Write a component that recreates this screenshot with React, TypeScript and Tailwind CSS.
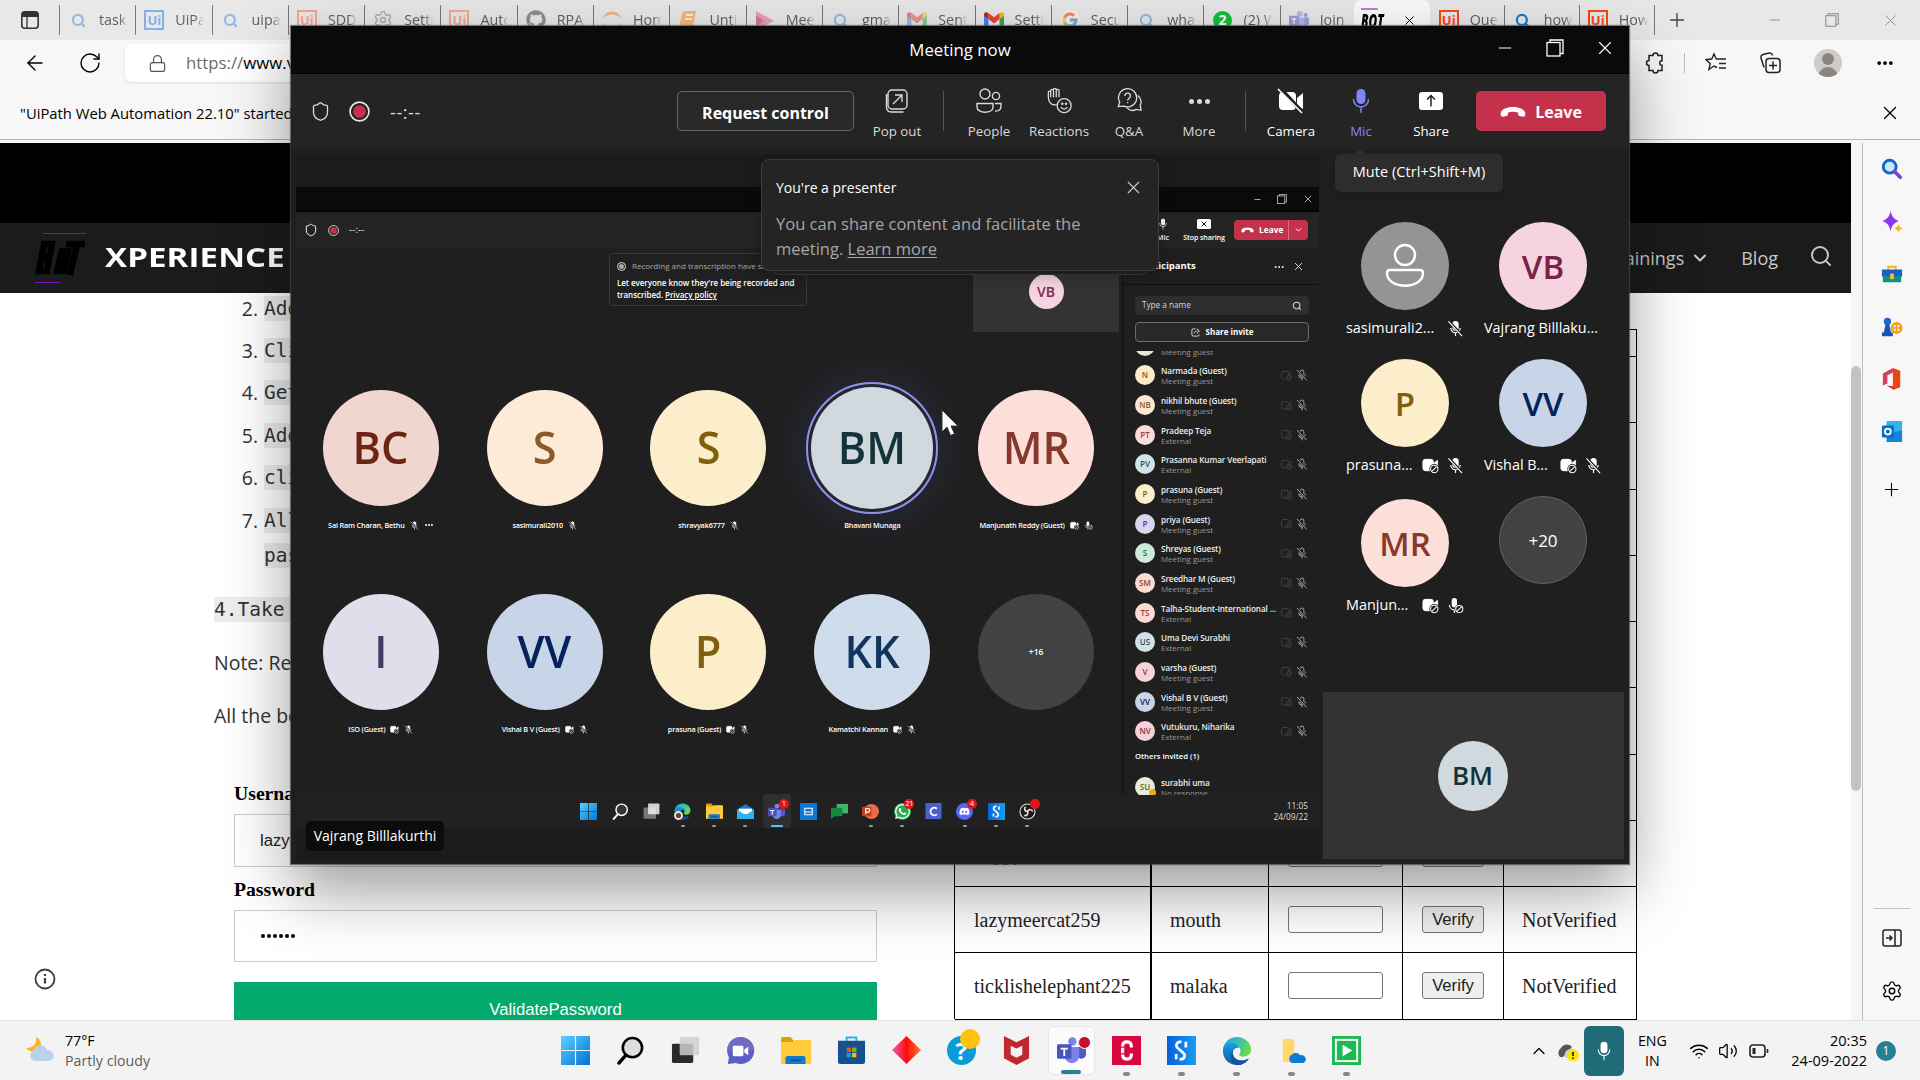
import React from "react";
import {
  ArrowLeft, RotateCw, Lock, Search, Settings, X, Plus, Minus, Shield, ChevronDown, ChevronUp,
  Wifi, Volume2, MoreHorizontal,
} from "lucide-react";
import { FcGoogle } from "react-icons/fc";
import { FaGithub, FaWhatsapp, FaDiscord } from "react-icons/fa";

type P = { c?: string };

/* ---------- shared glyphs ---------- */
const Restore = ({ c = "" }: P) => (
  <svg viewBox="0 0 18 18" className={c} fill="none" stroke="currentColor" strokeWidth="1.3">
    <rect x="1" y="3.5" width="13" height="13.5" /><path d="M4 3.5V1h13v13.5h-3" />
  </svg>
);
const RecordDot = ({ c = "" }: P) => (
  <svg viewBox="0 0 20 20" className={c}>
    <circle cx="10" cy="10" r="9" fill="none" stroke="#e6e6e6" strokeWidth="1.6" /><circle cx="10" cy="10" r="6" fill="#c4314b" />
  </svg>
);
const MicFull = ({ c = "" }: P) => (
  <svg viewBox="0 0 20 26" className={c}>
    <rect x="5.5" y="1" width="9" height="15" rx="4.5" fill="currentColor" />
    <path d="M2.5 11.5a7.5 7.5 0 0 0 15 0M10 19v5.5" fill="none" stroke="currentColor" strokeWidth="1.5" strokeLinecap="round" />
  </svg>
);
const MicOff = ({ c = "", line = false }: P & { line?: boolean }) => (
  <svg viewBox="0 0 18 18" className={c}>
    <rect x="6.2" y="1.5" width="5.6" height="9.5" rx="2.8" fill={line ? "none" : "currentColor"} stroke="currentColor" strokeWidth="1.1" />
    <path d="M4 8.5a5 5 0 0 0 10 0M9 13.5V17" fill="none" stroke="currentColor" strokeWidth="1.2" />
    <path d="M2 1.5 16 16.5" stroke="#1f1f1f" strokeWidth="3" /><path d="M1.5 1.5 16 17" stroke="currentColor" strokeWidth="1.2" />
  </svg>
);
const CamBlock = ({ c = "", line = false }: P & { line?: boolean }) => (
  <svg viewBox="0 0 18 18" className={c}>
    <rect x="1" y="2.5" width="11" height="12" rx="2.5" fill={line ? "none" : "currentColor"} stroke="currentColor" />
    <path d="M13 6l3.5-2.5V9H13z" fill={line ? "none" : "currentColor"} stroke="currentColor" strokeWidth=".8" />
    <circle cx="13" cy="12.7" r="5.2" fill="#1f1f1f" /><circle cx="13" cy="12.7" r="3.9" fill="none" stroke="currentColor" strokeWidth="1.1" />
    <path d="m10.4 15.3 5.2-5.2" stroke="currentColor" strokeWidth="1.1" />
  </svg>
);
const MicBlock = ({ c = "" }: P) => (
  <svg viewBox="0 0 18 18" className={c}>
    <rect x="5" y="1" width="5.6" height="10" rx="2.8" fill="currentColor" />
    <path d="M2.5 8.5a5.3 5.3 0 0 0 5.3 5V17" fill="none" stroke="currentColor" strokeWidth="1.2" />
    <circle cx="13" cy="12.7" r="5" fill="#1f1f1f" /><circle cx="13" cy="12.7" r="3.8" fill="none" stroke="currentColor" strokeWidth="1.1" />
    <path d="m10.4 15.3 5.2-5.2" stroke="currentColor" strokeWidth="1.1" />
  </svg>
);
const Phone = ({ c = "" }: P) => (
  <svg viewBox="0 0 26 12" className={c} fill="currentColor">
    <path d="M13 1C7.500 1 3.200 2.700 1.300 5.500.5 6.800.600 8.400 1 9.700c.3.900 1 1.300 1.900 1.100l3.600-.8c.7-.2 1.200-.7 1.300-1.400l.3-2C10 6 11.400 5.800 13 5.800s3 .2 4.900.8l.3 2c.1.700.6 1.200 1.300 1.400l3.600.8c.9.2 1.600-.2 1.900-1.100.4-1.300.5-2.900-.3-4.200C22.800 2.700 18.500 1 13 1z" />
  </svg>
);
const UiLogo = ({ c = "" }: P) => (
  <div className={"flex h-5 w-5 items-center justify-center border-2 border-current text-[13px] leading-none font-bold " + c}>Ui</div>
);
const TeamsLogo = ({ c = "" }: P) => (
  <svg viewBox="0 0 32 32" className={c}>
    <circle cx="17" cy="6" r="4.600" fill="#7b83eb" /><circle cx="26.500" cy="8" r="3.300" fill="#5059c9" />
    <path d="M22 12h8.500c.8 0 1.500.7 1.500 1.500V20a5 5 0 0 1-10 0z" fill="#5059c9" />
    <path d="M9 12h14c.8 0 1.500.7 1.500 1.500V22a8 8 0 0 1-16 0z" fill="#7b83eb" />
    <rect x="0" y="9" width="16" height="16" rx="1.500" fill="#4b53bc" />
    <path d="M4 13h8v2H9v7H7v-7H4z" fill="#fff" />
  </svg>
);
const EdgeLogo = ({ c = "" }: P) => (
  <svg viewBox="0 0 32 32" className={c}>
    <defs>
      <linearGradient id="eg1" x1="0" y1="0" x2="1" y2=".3"><stop offset="0" stopColor="#1fa3e6" /><stop offset=".6" stopColor="#35c1b1" /><stop offset="1" stopColor="#6cd64e" /></linearGradient>
      <linearGradient id="eg2" x1="0" y1="0" x2="0" y2="1"><stop offset="0" stopColor="#1b9de2" /><stop offset="1" stopColor="#0c59a4" /></linearGradient>
    </defs>
    <path d="M1 16C1 7 8 1 16 1s15 6 15 13c0 5-4 8-8.500 8-3.500 0-4.500-1.500-4-2.500 2-2 1.500-6-.5-8C14 8 5 8 1 16z" fill="url(#eg1)" />
    <path d="M1 16c0-6 5-9 9.500-8.500C15 8 18 10 18.500 13c-2-1-5-.5-6.500 3-1.500 4 1 8 5 9.500 4 1.500 8 .5 11.500-1.500C26 28.500 21.500 31 16 31 8 31 1 25 1 16z" fill="url(#eg2)" />
    <path d="M12 16c-1.500 4 1 8 5 9.500 4 1.500 8 .5 11.500-1.500C26 28.500 21.500 31 17 31c-7-1-10-10-5-15z" fill="#14529b" />
  </svg>
);
const WinLogo = ({ c = "" }: P) => (
  <svg viewBox="0 0 30 30" className={c}>
    <defs><linearGradient id="win" x1="0" y1="0" x2="1" y2="1"><stop offset="0" stopColor="#5ad2ff" /><stop offset="1" stopColor="#0072d6" /></linearGradient></defs>
    <path d="M0 0h14.400v14.400H0zM15.600 0H30v14.400H15.600zM0 15.600h14.400V30H0zM15.600 15.600H30V30H15.600z" fill="url(#win)" />
  </svg>
);
const Glass = ({ c = "" }: P) => (
  <svg viewBox="0 0 30 30" className={c} fill="none">
    <circle cx="17" cy="12" r="10" stroke="currentColor" strokeWidth="2.600" fill="#8883" /><path d="m10 20-7 8" stroke="currentColor" strokeWidth="3.500" strokeLinecap="round" />
  </svg>
);
const TaskView = ({ c = "" }: P) => (
  <svg viewBox="0 0 30 30" className={c}>
    <rect x="1" y="8" width="22" height="20" rx="1.500" fill="var(--tv)" /><rect x="9" y="1" width="20" height="19" rx="1" fill="var(--tw)" opacity=".85" />
  </svg>
);
const Folder = ({ c = "" }: P) => (
  <svg viewBox="0 0 30 28" className={c}>
    <path d="M0 1.500C0 .7.600 0 1.500 0h8l3 3.500V8H0z" fill="#e0a000" /><path d="M0 5h12l2-2h14.500c.8 0 1.500.7 1.500 1.500V27H0z" fill="#ffcb3d" />
    <path d="M4.500 27v-6c0-1 .8-2 2-2h16c1.200 0 2 1 2 2v6z" fill="#1378cf" /><path d="M9 22.500h11v1.500H9z" fill="#0a4f94" />
  </svg>
);
const SLogo = ({ c = "" }: P) => (
  <svg viewBox="0 0 30 30" className={c}>
    <defs><linearGradient id="sl" x1="0" y1="0" x2="1" y2="0"><stop offset="0" stopColor="#0560dc" /><stop offset="1" stopColor="#1a9df0" /></linearGradient></defs>
    <rect width="30" height="30" fill="url(#sl)" />
    <path d="M15 6h-1.500a3.700 3.700 0 0 0-2.200 6.700l5.400 4.600a3.700 3.700 0 0 1-2.200 6.700H13M19.500 6v6M9.500 18.500V24" fill="none" stroke="#fff" strokeWidth="2.800" />
  </svg>
);

/* ---------- browser ---------- */
type Tab = { icon: string; text: string };
const tabs: Tab[] = [
  { icon: "s", text: "task" }, { icon: "ub", text: "UiPa" }, { icon: "s", text: "uipat" }, { icon: "u", text: "SDD" },
  { icon: "g", text: "Settin" }, { icon: "u", text: "Auto" }, { icon: "gh", text: "RPA-" }, { icon: "j", text: "Hom" },
  { icon: "b", text: "Untit" }, { icon: "m", text: "Mee" }, { icon: "s", text: "gma" }, { icon: "gm", text: "Sent" },
  { icon: "gmf", text: "Settin" }, { icon: "go", text: "Secu" }, { icon: "s", text: "what" }, { icon: "w", text: "(2) W" },
  { icon: "t", text: "Join" },
];
const Gm = ({ c = "" }: P) => (
  <svg viewBox="0 0 20 16" className={c}>
    <path d="M0 2v14h4.500V6z" fill="#4285f4" /><path d="M20 2v14h-4.500V6z" fill="#34a853" /><path d="M0 2.500C0 0 2.500-.5 4.500 1v6L0 4z" fill="#c5221f" />
    <path d="M20 2.500C20 0 17.500-.5 15.500 1v6L20 4z" fill="#fbbc04" /><path d="M4.500 1 10 5.300 15.500 1v6L10 11.500 4.500 7z" fill="#ea4335" />
  </svg>
);
function TabIcon({ k }: { k: string }) {
  switch (k) {
    case "s": return <Search className="h-[15px] w-[15px] text-[#8fbbe4]" strokeWidth={3.5} />;
    case "sf": return <Search className="h-[15px] w-[15px] text-[#1579d0]" strokeWidth={3.5} />;
    case "ub": return <UiLogo c="text-[#82b1e6]" />;
    case "u": return <UiLogo c="text-[#f5a58f]" />;
    case "uf": return <UiLogo c="text-[#fa4616]" />;
    case "g": return <Settings className="h-5 w-5 text-[#a9a9a9]" strokeWidth={1.600} />;
    case "gh": return <FaGithub className="h-5 w-5 text-[#8b8f93]" />;
    case "j": return <svg viewBox="0 0 20 20" className="h-5 w-5"><path d="M1 8a9.500 9.500 0 0 1 18 0A13 13 0 0 0 1 8zM1 13a9.500 9.500 0 0 0 18 0 13 13 0 0 1-18 0z" fill="#f5b183" /></svg>;
    case "b": return <svg viewBox="0 0 20 20" className="h-5 w-5"><path d="M5 1h13l-3 15H1z" fill="#f5b877" /><path d="M8 5h7M7 9h7" stroke="#fff" strokeWidth="1.500" /></svg>;
    case "m": return <svg viewBox="0 0 20 20" className="h-5 w-5"><path d="M1 1l18 10L1 20z" fill="#eb9fbc" /><path d="M1 5l8 6-8 6z" fill="#d07a9a" /></svg>;
    case "gm": return <Gm c="h-4 w-5 opacity-50" />;
    case "gmf": return <Gm c="h-4 w-5" />;
    case "go": return <span className="rounded-full bg-white/70 p-px opacity-55"><FcGoogle className="h-[18px] w-[18px]" /></span>;
    case "w": return <span className="flex h-[19px] w-[19px] items-center justify-center rounded-full bg-[#12bd3f] text-[14px] leading-none font-bold text-white">2</span>;
    case "t": return <TeamsLogo c="h-5 w-5 opacity-50" />;
  }
  return null;
}
const TabItem = ({ t, w }: { t: Tab; w: string }) => (
  <div className={"flex h-[30px] shrink-0 items-center overflow-hidden border-l border-[#777] " + w}>
    <div className="ml-[7px] flex w-[22px] shrink-0 items-center justify-center"><TabIcon k={t.icon} /></div>
    <div className="ml-[10px] w-[29px] overflow-hidden whitespace-nowrap text-[14.300px] text-[#606060] [mask-image:linear-gradient(90deg,#000_70%,transparent)]">{t.text}</div>
  </div>
);

function TabStrip() {
  return (
    <div className="flex h-10 shrink-0 bg-[#e8e8e8]">
      <div className="flex w-[59px] items-center pl-[21px]">
        <svg viewBox="0 0 18 18" className="h-[18px] w-[18px]"><rect x=".8" y=".8" width="16.400" height="16.400" rx="3" fill="none" stroke="#333" strokeWidth="1.600" /><path d="M1 1h16v5H1z" fill="#333" /><path d="M6 6v11" stroke="#333" strokeWidth="1.300" /></svg>
      </div>
      <div className="flex items-start pt-[5px]">
        {tabs.map((t, i) => <TabItem key={i} t={t} w={i === 16 ? "w-[74px]" : "w-[76.300px]"} />)}
      </div>
      <div className="flex h-10 w-[76px] items-center justify-between rounded-t-lg bg-[#fafafa] pr-[13px] pl-[7px]">
        <span className="w-[27px] origin-left scale-x-[0.620] border-t-2 border-[#b37fe0] text-[19px] leading-[22px] font-black italic">BOT</span>
        <X className="h-[15px] w-[15px]" strokeWidth={1.600} />
      </div>
      <div className="flex items-start pt-[5px] [&>div:first-child]:border-transparent">
        <TabItem t={{ icon: "uf", text: "Que" }} w="w-[74px]" />
        <TabItem t={{ icon: "sf", text: "how" }} w="w-[75px]" />
        <TabItem t={{ icon: "uf", text: "How" }} w="w-[75px]" />
        <div className="flex h-[30px] items-center border-l border-[#777] pl-[11px]"><Plus className="h-[22px] w-[22px] text-[#444]" strokeWidth={1.500} /></div>
      </div>
      <div className="ml-auto flex items-center gap-[42px] pr-5 text-[#888]">
        <Minus className="h-4 w-4" strokeWidth={1.300} /><Restore c="h-[14px] w-[14px]" /><X className="h-[19px] w-[19px]" strokeWidth={1.100} />
      </div>
    </div>
  );
}

function AddressBar() {
  return (
    <div className="flex h-[46px] shrink-0 items-center bg-[#f7f7f7]">
      <ArrowLeft className="ml-[23px] h-6 w-6" strokeWidth={1.400} />
      <RotateCw className="ml-[31px] h-6 w-6" strokeWidth={1.400} />
      <div className="ml-[23px] flex h-[38px] w-[1400px] items-center rounded-md bg-white pl-[23px] text-[16.800px] whitespace-pre shadow-sm">
        <Lock className="h-[19px] w-[19px] text-[#555]" strokeWidth={1.500} />
        <span className="ml-[19px] text-[#6b6b6b]">https://</span><span>www.vajrang.com</span>
      </div>
      <div className="ml-auto flex w-[290px] items-center pl-[14px]">
        <svg viewBox="0 0 22 22" className="h-[22px] w-[22px]" fill="none" stroke="#222" strokeWidth="1.500"><path d="M5 3.500h4a2.500 2.500 0 0 1 5 0h4v5.200a2.300 2.300 0 0 0 0 4.600v5.200h-4a2.500 2.500 0 0 1-5 0H5v-5a2.500 2.500 0 0 1 0-5z" /></svg>
        <div className="ml-[18px] h-5 w-px bg-[#bbb]" />
        <svg viewBox="0 0 22 22" className="ml-5 h-[22px] w-[22px]" fill="none" stroke="#222" strokeWidth="1.400"><path d="M12 15.500 9 14l-5 3.500 1.200-6L1 7.700l5.700-.7L9 2l2.300 5H21M14 11.500h7M14 16h7" /></svg>
        <svg viewBox="0 0 22 22" className="ml-8 h-[22px] w-[22px]" fill="none" stroke="#222" strokeWidth="1.500"><rect x="7" y="6.500" width="14" height="14" rx="3" /><path d="M14 9.500v8M10 13.500h8M5 15.500 2 6a3 3 0 0 1 2-3.500l6-1.500a3 3 0 0 1 3.500 2.500" /></svg>
        <div className="ml-[33px] flex h-7 w-7 flex-col items-center overflow-hidden rounded-full bg-[#cfcbc8] pt-1"><span className="h-3 w-3 shrink-0 rounded-full bg-[#8a8583]" /><span className="mt-0.5 h-4 w-5 shrink-0 rounded-t-full bg-[#8a8583]" /></div>
        <MoreHorizontal className="ml-[33px] h-5 w-5" strokeWidth={2.500} />
      </div>
    </div>
  );
}

function Site() {
  const items = ["Add", "Cli", "Get", "Add", "cli", "All"];
  return (
    <div className="relative flex w-[1851px] shrink-0 flex-col overflow-hidden bg-white">
      <div className="h-20 shrink-0 bg-black" />
      <div className="flex h-[70px] shrink-0 items-center bg-[#1b1b1b]">
        <div className="ml-[35px] flex h-[50px] w-[51px] flex-col justify-between">
          <div className="ml-2 h-px bg-[#7a12c8]" />
          <svg viewBox="0 0 50 36" className="h-9 w-[50px]" fill="none" stroke="#000" strokeWidth="6.500"><path d="M9 4h8l-2 11-4 3 3 2-2 11H4zM27 11h6l-4 20h-7zM31 4h19M42 4l-7 31" /></svg>
          <div className="h-px w-[25px] bg-[#7a12c8]" />
        </div>
        <span className="-mt-[2px] ml-[19px] w-[190px] origin-left scale-x-[1.200] text-[27.500px] font-bold tracking-[0.100px] text-white">XPERIENCE</span>
        <div className="ml-auto flex items-center text-[18px] text-[#c8c8c8]">
          <span>Trainings</span><ChevronDown className="ml-[6px] h-5 w-5" strokeWidth={2.500} />
          <span className="ml-[31px]">Blog</span><Search className="mr-[18px] ml-[31px] h-6 w-6 -translate-y-0.5" strokeWidth={2} />
        </div>
      </div>
      <div className="flex flex-1">
        <div className="-mt-[6px] w-[877px] shrink-0 text-[19.500px] text-[#333]">
          {items.map((t, i) => (
            <div key={i} className="flex h-[42.400px] items-center">
              <span className="w-[258px] text-right">{i + 2}.</span>
              <span className="ml-[6px] bg-[#ececec] font-['DejaVu_Sans_Mono',monospace] leading-[25px]">{t} text</span>
            </div>
          ))}
          <div className="flex h-7 items-center pl-[264px]"><span className="bg-[#ececec] font-['DejaVu_Sans_Mono',monospace] leading-[25px]">password</span></div>
          <div className="mt-[13px] flex h-[54px] items-center pl-[214px]"><span className="bg-[#ececec] font-['DejaVu_Sans_Mono',monospace] leading-[25px]">4.Take the</span></div>
          <div className="-mt-px flex h-[54px] items-center pl-[214px]">Note: Refer</div>
          <div className="-mt-px flex h-[54px] items-center pl-[214px]">All the best</div>
          <div className="pl-[234px] font-['Liberation_Sans',sans-serif] text-[16.700px] text-black">
            <div className="mt-[38px] font-['Liberation_Serif',serif] text-[19.700px] leading-[26px] font-bold">Username</div>
            <div className="mt-2 flex h-[53px] items-center border border-[#ccc] pl-[25px] text-[#222]">lazymeercat</div>
            <div className="mt-[9px] font-['Liberation_Serif',serif] text-[19.700px] leading-[26px] font-bold">Password</div>
            <div className="mt-2 flex h-[52px] items-center border border-[#ccc] pl-[26px]">
              <span className="flex gap-[2px]">{[0, 1, 2, 3, 4, 5].map((n) => <i key={n} className="h-1 w-1 rounded-full bg-black" />)}</span>
            </div>
            <div className="mt-5 flex h-[54px] items-center justify-center bg-[#04aa6d] text-white">ValidatePassword</div>
          </div>
        </div>
        <div className="mt-9 ml-[77px] h-[690px] w-[683px] border-t border-l border-black font-['Liberation_Serif',serif] text-[20px] text-[#222]">
          <div className="flex h-[27px]"><Row /></div>
          {[0, 1, 2, 3, 4, 5, 6].map((n) => <div key={n} className="flex h-[66.250px]"><Row u="sleepypanda101" w="river" /></div>)}
          <div className="flex h-[66.250px]"><Row u="happyotter332" w="stone" /></div>
          <div className="flex h-[66.250px]"><Row u="lazymeercat259" w="mouth" /></div>
          <div className="flex h-[66.250px]"><Row u="ticklishelephant225" w="malaka" /></div>
        </div>
      </div>
      <svg viewBox="0 0 22 22" className="absolute top-[825px] left-[34px] h-[22px] w-[22px]" fill="none" stroke="#3c3c3c" strokeWidth="1.800"><circle cx="11" cy="11" r="9.500" /><path d="M11 10v5.500M11 6v2" strokeWidth="2.200" /></svg>
    </div>
  );
}
function Row({ u, w }: { u?: string; w?: string }) {
  const cell = "flex shrink-0 items-center border-b border-black ";
  return (
    <>
      <div className={cell + "w-[197px] border-r-2 pr-px pl-[19px]"}>{u}</div>
      <div className={cell + "w-[117px] border-r pl-[18px]"}>{w}</div>
      <div className={cell + "w-[134px] justify-center border-r"}>{u && <div className="h-[27px] w-[95px] rounded-[3px] border border-[#767676] bg-white/40" />}</div>
      <div className={cell + "w-[101px] justify-center border-r"}>{u && <div className="flex h-[27px] w-[62px] items-center justify-center rounded-[3px] border border-[#767676] bg-[#efefef] font-['Liberation_Sans',sans-serif] text-[16.700px]">Verify</div>}</div>
      <div className={cell + "w-[133px] border-r pl-[18px]"}>{u && "NotVerified"}</div>
    </>
  );
}

function SideBar() {
  const s = "h-[22px] w-[22px]";
  return (
    <div className="flex w-[58px] shrink-0 flex-col items-center border-l border-[#bdbdbd] bg-[#f7f7f7] pt-[15px]">
      <div className="flex flex-col gap-[30.500px]">
        <svg viewBox="0 0 24 24" className={s} fill="none"><circle cx="9.500" cy="9.500" r="7" stroke="#1466c8" strokeWidth="3.200" fill="#c9e6ff" /><path d="m15 15 6 6" stroke="#7a3fe0" strokeWidth="4" strokeLinecap="round" /></svg>
        <svg viewBox="0 0 24 24" className={s}><path d="M10.500 0c1.500 6 3 8.500 9 11-6 2.500-7.500 5-9 11-1.500-6-3-8.500-9-11 6-2.500 7.500-5 9-11z" fill="#8a38f0" /><path d="M19 14c.7 3 1.500 3.800 4.500 5-3 1.200-3.800 2-4.500 5-.7-3-1.500-3.800-4.500-5 3-1.200 3.800-2 4.500-5z" fill="#f5b31b" /></svg>
        <svg viewBox="0 0 24 24" className={s}><path d="M8 8V4h8v4" fill="none" stroke="#f0b429" strokeWidth="2.200" /><rect x="1" y="7" width="22" height="8" rx="1" fill="#1b5fc4" /><path d="M2 14h20v7H2z" fill="#0f9284" /><rect x="10" y="11.500" width="4" height="6" fill="#f7c02c" /></svg>
        <svg viewBox="0 0 24 24" className={s}><circle cx="7" cy="6" r="4" fill="#1b66d1" /><path d="M5 9h4l2 9h2v4H1v-4h2z" fill="#1757b8" /><circle cx="17" cy="13" r="6.500" fill="#f2a41d" /><g fill="#fff"><circle cx="15" cy="11" r="1.200" /><circle cx="19" cy="11" r="1.200" /><circle cx="15" cy="15" r="1.200" /><circle cx="19" cy="15" r="1.200" /></g></svg>
        <svg viewBox="0 0 24 24" className={s}><path d="M2 6 13 0v5L7 8v9l-5 2z" fill="#d4405c" /><path d="M13 0l8 3v18l-8 3v-4z" fill="#e8480c" /><path d="M6 19l8 1v4z" fill="#e2334a" /></svg>
        <svg viewBox="0 0 24 24" className={s}><rect x="6" y="0" width="17" height="14" rx="1" fill="#33b3ee" /><path d="M6 14l17-4v12c0 1-.5 1-1 1H6z" fill="#1584d6" /><rect x="1" y="5" width="13" height="13" rx="1.500" fill="#0f6cbd" /><circle cx="7.500" cy="11.500" r="3.200" fill="none" stroke="#fff" strokeWidth="2" /></svg>
      </div>
      <Plus className="mt-[36px] h-[21px] w-[21px]" strokeWidth={1.300} />
      <div className="mt-auto h-px w-9 bg-[#c4c4c4]" />
      <svg viewBox="0 0 20 20" className="mt-[19px] h-5 w-5" fill="none" stroke="#222" strokeWidth="1.500"><rect x="1" y="2" width="18" height="16" rx="2" /><path d="M13 2v16M4 10h6M7.500 7.500 10 10l-2.500 2.500" /></svg>
      <Settings className="mt-[32px] mb-[18px] h-[22px] w-[22px]" strokeWidth={1.500} />
    </div>
  );
}

/* ---------- meeting window ---------- */
const Dashes = ({ c = "" }: P) => <span className={c}>--:--</span>;
const tool = "flex w-[70px] flex-col items-center ";
const lab = "mt-[8px] text-[13.300px] leading-[18px] whitespace-nowrap";

function MeetingBar() {
  return (
    <div className="flex h-[75px] shrink-0 bg-[#242424] text-[#dadada]">
      <Shield className="mt-[27px] ml-[19px] h-[21px] w-[21px]" strokeWidth={1.500} />
      <RecordDot c="mt-[27px] ml-[18px] h-[21px] w-[21px]" />
      <Dashes c="mt-[26px] ml-[20px] w-[36px] text-[18px] leading-6 tracking-[0.600px]" />
      <div className="mt-[17px] ml-[251px] flex h-10 w-[177px] items-center justify-center rounded-[5px] border border-[#666] bg-[#292929] pt-[3px] text-[16px] font-bold text-white">Request control</div>
      <div className={"mt-[14px] ml-[8px] " + tool}>
        <svg viewBox="0 0 26 26" className="h-[26px] w-[26px]" fill="none" stroke="currentColor" strokeWidth="1.400"><rect x="4" y="2" width="19" height="19" rx="4" /><path d="M2.500 6v13c0 3 2 5 5 5h12M9 16l9-9M11 7h7v7" /></svg>
        <span className={lab}>Pop out</span>
      </div>
      <div className="mt-[17px] ml-[11px] h-10 w-px bg-[#555]" />
      <div className="mt-[14px] ml-[10px] flex">
        <div className={tool}>
          <svg viewBox="0 0 26 26" className="h-[26px] w-[26px]" fill="none" stroke="currentColor" strokeWidth="1.400"><circle cx="9" cy="6" r="5" /><circle cx="20" cy="8" r="3.600" /><path d="M1 15.500h16v3.500c0 7-16 7-16 0zM19 15.500h6v3c0 3-2.500 5-6 4.500" /></svg>
          <span className={lab}>People</span>
        </div>
        <div className={tool}>
          <svg viewBox="0 0 28 28" className="h-[26px] w-[27px]" fill="none" stroke="currentColor" strokeWidth="1.400"><path d="M11 18c-5 1-9-2-9-8V4.500c0-1.600 2.500-1.600 2.500 0V3c0-2 3-2 3 0V2c0-2 3-2 3 0v1c0-2 3-2 3 0v7M4.500 4.500V10M7.500 3v7M10.500 3v7" /><circle cx="19" cy="19" r="7.500" /><path d="M15.500 20.500c1.500 3 5.500 3 7 0" /><circle cx="17" cy="17" r=".7" /><circle cx="21" cy="17" r=".7" /></svg>
          <span className={lab}>Reactions</span>
        </div>
        <div className={tool}>
          <svg viewBox="0 0 28 28" className="h-[26px] w-[27px]" fill="none" stroke="currentColor" strokeWidth="1.400"><path d="M2 20l1.500-4.500a9.800 9.800 0 1 1 4.500 4L2 20zM23 8c4 3 4 8 2.500 11l1 5-5-1c-4 2-8 1-10-1.500" /><path d="M9 8.500c0-4 6-4 6 0 0 2.500-3 2.500-3 5M12 15v1.500" /></svg>
          <span className={lab}>Q&amp;A</span>
        </div>
        <div className={tool}>
          <div className="flex h-[26px] items-center gap-[3px]">{[0, 1, 2].map((n) => <i key={n} className="h-[5px] w-[5px] rounded-full bg-[#dadada]" />)}</div>
          <span className={lab}>More</span>
        </div>
      </div>
      <div className="mt-[17px] ml-[11px] h-10 w-px bg-[#555]" />
      <div className="mt-[14px] ml-[10px] flex text-white">
        <div className={tool}>
          <svg viewBox="0 0 28 26" className="h-[26px] w-[28px]"><rect x="2" y="4" width="17" height="18" rx="4" fill="#fff" /><path d="M20 10l6-5v16l-6-4z" fill="#fff" /><path d="M3 0l23 25" stroke="#242424" strokeWidth="4" /><path d="M1 1l24 24" stroke="#fff" strokeWidth="1.600" /></svg>
          <span className={lab}>Camera</span>
        </div>
        <div className={tool + "text-[#7f85f5]"}><MicFull c="h-[26px] w-5" /><span className={lab}>Mic</span></div>
        <div className={tool}>
          <svg viewBox="0 0 26 26" className="h-[26px] w-[26px]"><rect x="1" y="4" width="24" height="18" rx="3" fill="#fff" /><path d="M13 18.500V8M9 11.500l4-4 4 4" fill="none" stroke="#242424" strokeWidth="1.500" /></svg>
          <span className={lab}>Share</span>
        </div>
      </div>
      <div className="mt-[17px] ml-[10px] flex h-10 w-[130px] items-center justify-center rounded-[5px] bg-[#c4314b] pt-[2px] text-[16px] font-bold text-white"><Phone c="mr-[9px] h-3 w-[26px]" />Leave</div>
    </div>
  );
}

type Person = { i: string; n: string; bg: string; fg: string; cam?: boolean; mic?: string; dots?: boolean };
const gallery: Person[] = [
  { i: "BC", n: "Sai Ram Charan, Bethu", bg: "bg-[#f1d6cf]", fg: "text-[#6d2413]", mic: "off", dots: true },
  { i: "S", n: "sasimurali2010", bg: "bg-[#fdebd7]", fg: "text-[#8a5a28]", mic: "off" },
  { i: "S", n: "shravyak6777", bg: "bg-[#fceecb]", fg: "text-[#80600f]", mic: "off" },
  { i: "BM", n: "Bhavani Munaga", bg: "bg-[#d0dade]", fg: "text-[#13323a]" },
  { i: "MR", n: "Manjunath Reddy (Guest)", bg: "bg-[#fcdfd9]", fg: "text-[#853a2d]", cam: true, mic: "block" },
  { i: "I", n: "ISO (Guest)", bg: "bg-[#e2ddeb]", fg: "text-[#443a63]", cam: true, mic: "off" },
  { i: "VV", n: "Vishal B V (Guest)", bg: "bg-[#c8d5e8]", fg: "text-[#04235a]", cam: true, mic: "off" },
  { i: "P", n: "prasuna (Guest)", bg: "bg-[#fceecb]", fg: "text-[#80600f]", cam: true, mic: "off" },
  { i: "KK", n: "Kamatchi Kannan", bg: "bg-[#cfdceb]", fg: "text-[#12355f]", cam: true, mic: "off" },
];
function Gallery() {
  return (
    <div className="grid w-[819px] auto-rows-[204px] grid-cols-5 text-white">
      {gallery.map((p, k) => (
        <div key={k} className="flex flex-col items-center">
          <div className={"flex h-[116px] w-[116px] items-center justify-center rounded-full pb-[3px] text-[45.500px] leading-none font-semibold " + p.bg + " " + p.fg + (p.i === "BM" ? " shadow-[0_0_40px_14px_rgba(70,65,120,0.300)] outline-[2px] outline-offset-[6px] outline-[#8f90f0] ring-[3px] ring-[#d0dade]" : "")}>
            <span className="scale-x-95">{p.i}</span>
          </div>
          <div className="mt-[12px] flex h-[14px] items-center gap-[5px] text-[7.300px] leading-[10px] font-semibold tracking-tight whitespace-nowrap">
            {p.n}{p.cam && <CamBlock c="h-[9px] w-[9px]" />}{p.mic === "off" && <MicOff c="h-[9px] w-[9px]" />}{p.mic === "block" && <MicBlock c="h-[9px] w-[9px]" />}{p.dots && <MoreHorizontal className="h-[10px] w-[10px]" strokeWidth={3} />}
          </div>
        </div>
      ))}
      <div className="flex justify-center"><div className="flex h-[116px] w-[116px] items-center justify-center rounded-full bg-[#424242] text-[8.500px] font-semibold">+16</div></div>
    </div>
  );
}
const list = [
  ["N", "Narmada (Guest)", "Meeting guest", "bg-[#faecc8] text-[#80600f]"],
  ["NB", "nikhil bhute (Guest)", "Meeting guest", "bg-[#fce8d2] text-[#8a5a28]"],
  ["PT", "Pradeep Teja", "External", "bg-[#fbdcd9] text-[#9c3f3a]"],
  ["PV", "Prasanna Kumar Veerlapati", "External", "bg-[#d3e3ea] text-[#24536b]"],
  ["P", "prasuna (Guest)", "Meeting guest", "bg-[#fceecb] text-[#80600f]"],
  ["P", "priya (Guest)", "Meeting guest", "bg-[#d9d5ef] text-[#4a4085]"],
  ["S", "Shreyas (Guest)", "Meeting guest", "bg-[#cfeadb] text-[#1f6b46]"],
  ["SM", "Sreedhar M (Guest)", "Meeting guest", "bg-[#fbdcd5] text-[#97402f]"],
  ["TS", "Talha-Student-International ...", "External", "bg-[#fbdcd5] text-[#97402f]"],
  ["US", "Uma Devi Surabhi", "External", "bg-[#d0e2e6] text-[#1f5560]"],
  ["V", "varsha (Guest)", "Meeting guest", "bg-[#f5d5d9] text-[#8d3648]"],
  ["VV", "Vishal B V (Guest)", "Meeting guest", "bg-[#c8d5e8] text-[#04235a]"],
  ["NV", "Vutukuru, Niharika", "External", "bg-[#f3d3d6] text-[#86303f]"],
];
const PRow = ({ r, icons = true }: { r: string[]; icons?: boolean }) => (
  <div className="flex h-[29.650px] shrink-0 items-center">
    <div className={"flex h-5 w-5 shrink-0 items-center justify-center rounded-full text-[8px] leading-none font-semibold " + r[3]}>{r[0]}</div>
    <div className="mt-[2px] ml-[6px] w-[118px] text-[8.200px] leading-[10px] whitespace-nowrap"><div className="font-semibold tracking-[-0.120px] text-[#eee]">{r[1]}</div><div className="text-[7.900px] text-[#999]">{r[2]}</div></div>
    {icons && <><CamBlock line c="ml-[2px] h-[11px] w-[11px] text-[#555]" /><MicOff line c="ml-[4px] h-3 w-3 text-[#ccc]" /></>}
  </div>
);
function ParticipantPanel() {
  return (
    <div className="flex w-[197px] shrink-0 flex-col overflow-hidden border-l border-[#111] text-white">
      <div className="flex h-[37px] shrink-0 items-center border-b border-[#111] pt-px pr-[14px] pl-[15px] text-[9.500px] font-bold">
        Participants<MoreHorizontal className="ml-auto h-3 w-3" /><X className="ml-[7px] h-[13px] w-[13px]" strokeWidth={1.500} />
      </div>
      <div className="mt-[11px] ml-3 flex h-[19px] w-[174px] shrink-0 items-center justify-between rounded-sm bg-[#2e2e2e] px-[7px] text-[8.200px] text-[#d6d6d6]">Type a name<Search className="h-[10px] w-[10px]" strokeWidth={2.500} /></div>
      <div className="mt-[7px] ml-3 flex h-5 w-[174px] shrink-0 items-center justify-center gap-[6px] rounded-sm border border-[#6a6a6a] bg-[#292929] text-[8px] font-bold">
        <svg viewBox="0 0 10 10" className="h-[9px] w-[9px]" fill="none" stroke="#fff" strokeWidth=".9"><path d="M5 1H2.500C1.500 1 1 1.500 1 2.500v5C1 8.500 1.500 9 2.500 9h5C8.500 9 9 8.500 9 7.500V7M3.500 6C4 4 5 3.500 7 3.500M6.500 1 9.300 3.500 6.500 6" /></svg>
        Share invite
      </div>
      <div className="mt-[9px] ml-3 flex flex-1 flex-col overflow-hidden">
        <div className="-mt-[20px]"><PRow icons={false} r={["", "Guest", "Meeting guest", "bg-[#e6e4df]"]} /></div>
        {list.map((r, k) => <PRow key={k} r={r} />)}
        <div className="-ml-2 flex h-[22px] shrink-0 items-center gap-1 text-[7.700px] font-semibold"><span className="border-x-[2px] border-t-[3px] border-x-transparent border-t-[#aaa]" />Others invited (1)</div>
        <div className="relative mt-[4px]"><PRow icons={false} r={["SU", "surabhi uma", "No response", "bg-[#e5ecd9] text-[#4e6b2d]"]} /><i className="absolute top-[17px] left-[14px] h-[7px] w-[7px] rounded-full bg-[#f2a81d]" /></div>
      </div>
    </div>
  );
}

function InnerTaskbar() {
  const sl = "relative flex w-[31.350px] justify-center";
  const q = "h-[17px] w-[17px]";
  const Dot = ({ n }: { n: string }) => <i className="absolute -top-1 left-[18px] flex h-[10px] w-[10px] items-center justify-center rounded-full bg-[#e3131b] text-[7px] leading-none text-white not-italic">{n}</i>;
  const run = <i className="absolute -bottom-[7px] h-[2px] w-1 rounded bg-[#999]" />;
  return (
    <div className="flex h-[33px] shrink-0 items-center bg-[#212121] text-white [--tv:#777] [--tw:#eee]">
      <div className="-mt-px ml-[277px] flex items-center">
        <div className={sl}><WinLogo c={q} /></div>
        <div className={sl}><Glass c={q} /></div>
        <div className={sl}><TaskView c={q} /></div>
        <div className={sl}><EdgeLogo c={q} /><i className="absolute bottom-0 left-[7px] h-[9px] w-[9px] rounded-full border-2 border-[#e8ddd0] bg-[#5b4030]" />{run}</div>
        <div className={sl}><Folder c={q} />{run}</div>
        <div className={sl}><svg viewBox="0 0 18 18" className={q}><path d="M0 7l9-6 9 6v10H0z" fill="#1879c9" /><path d="M2 6h14v6H2z" fill="#fff" /><path d="M0 7l9 6 9-6v10H0z" fill="#2fb1ee" /></svg>{run}</div>
        <div className={sl}><i className="absolute -top-[9px] left-[2px] h-[34px] w-[28px] rounded bg-[#2f2f2f]" /><TeamsLogo c={q + " relative"} /><Dot n="1" /><i className="absolute -bottom-[7px] h-[2px] w-3 rounded bg-[#4cc2ff]" /></div>
        <div className={sl}><svg viewBox="0 0 18 18" className={q}><rect width="18" height="18" fill="#0a78d4" /><path d="M5 5.500h8v7H5zM5 9.500h8" fill="none" stroke="#fff" strokeWidth="1.100" /></svg></div>
        <div className={sl}><svg viewBox="0 0 18 18" className={q}><path d="M6 1h12v10H6z" fill="#45b36b" /><path d="M0 5h12v9H4l-4 3z" fill="#138a3b" /></svg></div>
        <div className={sl}><svg viewBox="0 0 18 18" className={q}><circle cx="10" cy="9" r="8" fill="#ed6c47" /><rect y="4" width="10" height="10" rx="1" fill="#c43e1c" /><path d="M4 12V6h2.500a1.700 1.700 0 0 1 0 3.600H4" fill="none" stroke="#fff" strokeWidth="1.200" /></svg>{run}</div>
        <div className={sl}><span className="h-[17px] rounded-full bg-[#25b04b]"><FaWhatsapp className={q} /></span><Dot n="21" />{run}</div>
        <div className={sl}><svg viewBox="0 0 18 18" className={q}><rect width="17" height="17" x=".5" fill="#4a5fd0" /><path d="M12.500 6a4 4 0 1 0 0 6" fill="none" stroke="#fff" strokeWidth="2" /></svg></div>
        <div className={sl}><span className="flex h-[17px] w-[17px] items-center justify-center rounded-full bg-[#5865f2]"><FaDiscord className="h-[11px] w-[11px]" /></span><Dot n="4" />{run}</div>
        <div className={sl}><SLogo c={q} />{run}</div>
        <div className={sl}><svg viewBox="0 0 18 18" className={q} fill="none" stroke="#ddd" strokeWidth="1.200"><circle cx="9" cy="9" r="8" fill="#1a1a1a" /><path d="M9 9c-3 0-4-3-2-5M9 9c1.500-3 5-2 5.500 0M9 9c1.500 2.500-1 5-3.500 4" strokeWidth="1.800" /></svg><Dot n="" />{run}</div>
      </div>
      <div className="-mt-[2px] mr-[11px] ml-auto text-right text-[8.300px] leading-[11px] text-[#ddd]">11:05<br />24/09/22</div>
    </div>
  );
}

function SharedScreen() {
  return (
    <div className="relative mt-[6px] ml-[5px] flex h-[705px] w-[1023px] shrink-0 flex-col bg-[#1b1b1b]">
      <div className="mt-8 flex h-[25px] shrink-0 items-center justify-end gap-[15px] border-b border-black bg-[#0a0a0a] pr-[5px] text-[#ddd]">
        <Minus className="h-[9px] w-[9px]" /><Restore c="h-[10px] w-[10px]" /><X className="h-3 w-3" strokeWidth={1.500} />
      </div>
      <div className="flex h-9 shrink-0 items-center bg-[#242424] text-white">
        <Shield className="ml-2 h-[14px] w-[14px]" strokeWidth={1.600} /><RecordDot c="ml-[10px] h-[11px] w-[11px]" /><Dashes c="ml-[10px] text-[9px] tracking-[0.300px]" />
        <div className="ml-auto flex w-6 flex-col items-center text-[7.300px] leading-[10px] font-semibold"><MicFull c="mb-[2px] h-3 w-[10px]" />Mic</div>
        <div className="ml-[7px] flex w-[44px] flex-col items-center text-[7.100px] leading-[10px] font-semibold tracking-[-0.100px] whitespace-nowrap"><svg viewBox="0 0 14 12" className="mb-[2px] h-3 w-[14px]"><rect y="1" width="14" height="10" rx="1.500" fill="#fff" /><path d="m4.500 3.500 5 5m0-5-5 5" stroke="#222" /></svg>Stop sharing</div>
        <div className="mr-[11px] ml-[8px] flex h-5 w-[74px] items-center rounded-sm bg-[#c4314b] text-[8.400px] font-bold"><Phone c="mr-[5px] ml-[7px] h-[6px] w-[13px]" />Leave<ChevronDown className="ml-auto h-5 w-5 border-l border-[#e2687d] p-[5px]" strokeWidth={2.500} /></div>
      </div>
      <div className="flex h-[547px] shrink-0 bg-[#1f1f1f]">
        <div className="relative w-[826px] pt-[142px] pl-[3px]">
          <Gallery />
          <div className="absolute top-[5px] left-[313px] h-[53px] w-[198px] rounded-[4px] border border-[#383838] bg-[#202020] pt-[6px] pl-[7px] text-[8px] leading-3 whitespace-nowrap text-[#aaa]">
            <div className="flex items-center gap-[6px]"><span className="h-[9px] w-[9px] rounded-full border border-[#bbb] bg-[#aaa] shadow-[inset_0_0_0_1px_#222]" />Recording and transcription have started.</div>
            <div className="mt-[5px] text-[8px] font-semibold tracking-[-0.050px] text-white">Let everyone know they're being recorded and<br />transcribed. <u>Privacy policy</u></div>
          </div>
          <div className="absolute top-[20px] left-[677px] flex h-[64px] w-[146px] justify-center bg-[#333] pt-[6px]"><div className="flex h-[35px] w-[35px] items-center justify-center rounded-full bg-[#f5d3df] text-[14px] font-semibold text-[#80284b]">VB</div></div>
          <svg viewBox="0 0 18 28" className="absolute top-[161px] left-[645px] h-7 w-[18px]"><path d="M1 1v22l5-5 3.500 8.500 4-1.700L10 17h7z" fill="#fff" stroke="#333" /></svg>
        </div>
        <ParticipantPanel />
      </div>
      <InnerTaskbar />
      <div className="absolute bottom-[9px] left-[10px] flex h-[30px] w-[138px] items-center justify-center rounded-[5px] bg-[#0c0c0c] pb-[2px] text-[14px] whitespace-nowrap text-white">Vajrang Billlakurthi</div>
    </div>
  );
}

const Face = ({ t, c }: { t: React.ReactNode; c: string }) => <div className={"flex h-[88px] w-[88px] shrink-0 items-center justify-center rounded-full text-[33px] leading-none font-semibold " + c}>{t}</div>;
function Roster() {
  const nm = "mt-[6px] flex h-6 w-[118px] items-center self-start whitespace-nowrap text-[14.400px] text-white";
  const cell = "flex h-[137px] flex-col items-center";
  return (
    <div className="flex flex-1 flex-col">
      <div className="mt-[73px] ml-[27px] grid w-[276px] grid-cols-[118px_118px] gap-x-[20px]">
        <div className={cell}><Face c="bg-[#949494]" t={<svg viewBox="0 0 40 50" className="h-[50px] w-10" fill="none" stroke="#fff" strokeWidth="2.400"><circle cx="20" cy="14" r="10" /><path d="M5 29h30c2 0 3 1 3 3 0 17-36 17-36 0 0-2 1-3 3-3z" /></svg>} /><div className={nm}>sasimurali2...<MicOff c="ml-auto h-[17px] w-[17px]" /></div></div>
        <div className={cell}><Face c="bg-[#f5d3df] text-[#7a2246]" t="VB" /><div className={nm}>Vajrang Billlaku...</div></div>
        <div className={cell}><Face c="bg-[#fceecb] text-[#80600f]" t="P" /><div className={nm}>prasuna...<CamBlock c="ml-auto h-[17px] w-[17px]" /><MicOff c="ml-[8px] h-[17px] w-[17px]" /></div></div>
        <div className={cell}><Face c="bg-[#c8d5e8] text-[#04235a]" t="VV" /><div className={nm}>Vishal B...<CamBlock c="ml-auto h-[17px] w-[17px]" /><MicOff c="ml-[8px] h-[17px] w-[17px]" /></div></div>
        <div className={cell + " pt-[3px]"}><Face c="bg-[#fcdfd9] text-[#853a2d]" t="MR" /><div className={nm}>Manjun...<CamBlock c="ml-auto h-[17px] w-[17px]" /><MicBlock c="ml-[8px] h-[17px] w-[17px]" /></div></div>
        <div className={cell}><Face c="border border-[#666] bg-[#424242] !text-[17px] !font-normal text-white" t="+20" /></div>
      </div>
      <div className="mt-auto mb-[5px] ml-1 flex h-[167px] w-[301px] items-center justify-center bg-[#333]"><div className="-ml-[2px] flex h-[70px] w-[70px] items-center justify-center rounded-full bg-[#d0dade] text-[26px] font-semibold text-[#13323a]">BM</div></div>
    </div>
  );
}

function MeetingWindow() {
  return (
    <div className="absolute top-[26px] left-[291px] flex h-[838px] w-[1338px] flex-col bg-[#1f1f1f] shadow-[0_26px_60px_rgba(0,0,0,0.400),0_0_1px_1px_rgba(90,90,90,0.700)]">
      <div className="relative flex h-[48px] shrink-0 items-center justify-center border-b border-black bg-[#0a0a0a] text-[16.800px] text-white">
        Meeting now
        <div className="absolute top-[11px] right-[13px] flex items-center gap-[30px]"><Minus className="h-5 w-5 -translate-x-px" strokeWidth={1.200} /><Restore c="h-[18px] w-[18px]" /><X className="h-[22px] w-[22px]" strokeWidth={1.200} /></div>
      </div>
      <MeetingBar />
      <div className="flex h-[715px]"><SharedScreen /><Roster /></div>
      <div className="absolute top-[200px] left-[480px] h-[49px] w-[378px] rounded-lg border border-[#3d3d3d] bg-[#242424]" />
      <div className="absolute top-[133px] left-[470px] h-[112px] w-[398px] rounded-lg border border-[#3d3d3d] bg-[#242424] pt-[17px] pl-[14px] shadow-[0_4px_16px_rgba(0,0,0,0.300)]">
        <div className="flex items-center justify-between pr-[14px] text-[14px] leading-5 font-medium text-white">You're a presenter<X className="h-[21px] w-[21px] text-[#ccc]" strokeWidth={1.300} /></div>
        <div className="mt-[13px] text-[16.500px] leading-[25px] whitespace-nowrap text-[#a6a6a6]">You can share content and facilitate the<br />meeting. <u className="underline-offset-2">Learn more</u></div>
      </div>
      <div className="absolute top-[128px] left-[1044px] flex h-[38px] w-[168px] items-center justify-center rounded-md bg-[#2d2d2d] pb-[2px] text-[14.500px] whitespace-nowrap text-white shadow-lg">
        <span className="tracking-[0.050px]">Mute (Ctrl+Shift+M)</span>
        <i className="absolute -top-[6px] left-[18px] border-x-[7px] border-b-[6px] border-x-transparent border-b-[#2d2d2d]" />
      </div>
    </div>
  );
}

/* ---------- taskbar ---------- */
function Taskbar() {
  const z = "h-[29px] w-[29px]";
  const apps: [React.ReactNode, boolean][] = [
    [<WinLogo c={z} />, false],
    [<Glass c={z} />, false],
    [<TaskView c={z} />, false],
    [<svg viewBox="0 0 30 30" className={z}><path d="M15 1a14 14 0 1 1-5 27l-8 1 1-7A14 14 0 0 1 15 1z" fill="#5b5fc7" /><path d="M15 1A14 14 0 0 1 29 15H1A14 14 0 0 1 15 1z" fill="#8070c0" opacity=".6" /><rect x="7" y="10" width="11" height="11" rx="1.500" fill="#fff" /><path d="M19 14l4-3v9l-4-3z" fill="#fff" /></svg>, false],
    [<Folder c="h-7 w-[30px]" />, false],
    [<svg viewBox="0 0 30 30" className={z}><path d="M10 6V1.500h10V6" fill="none" stroke="#2fb0ea" strokeWidth="2" /><path d="M1 5h28v21c0 2-1 3-3 3H4c-2 0-3-1-3-3z" fill="#15508f" /><path d="M10 12h4.500v4.500H10z" fill="#f25022" /><path d="M15.500 12H20v4.500h-4.500z" fill="#7fba00" /><path d="M10 17.500h4.500V22H10z" fill="#00a4ef" /><path d="M15.500 17.500H20V22h-4.500z" fill="#ffb900" /></svg>, false],
    [<svg viewBox="0 0 30 30" className={z}><defs><linearGradient id="dm"><stop offset="0" stopColor="#f05ab0" /><stop offset=".5" stopColor="#fb0d0d" /><stop offset="1" stopColor="#ff7a2a" /></linearGradient></defs><path d="M15 0l15 14.500L15 29 0 14.500z" fill="url(#dm)" /></svg>, false],
    [<div className="relative"><div className="flex h-[29px] w-[29px] items-center justify-center rounded-full bg-[#0a9bd8] text-[24px] leading-none font-bold text-white">?</div><i className="absolute -top-[7px] left-[13px] h-5 w-5 rounded-full bg-[#ffc20e]" /></div>, false],
    [<svg viewBox="0 0 28 30" className={z}><path d="M1 0l13 6.500L27 0v23l-13 7-13-7zM8 10v9.500l6 3 6-3V10l-6 3z" fill="#c2272d" fillRule="evenodd" /></svg>, false],
    [<div className="relative flex h-[49px] w-[47px] items-center justify-center rounded-md border border-[#e6e6e6] bg-[#fbfbfb]"><TeamsLogo c={z} /><i className="absolute top-[9px] right-[3px] h-[13px] w-[13px] rounded-full border border-white bg-[#c50f2b]" /><i className="absolute bottom-0 h-[4px] w-5 rounded bg-[#248092]" /></div>, false],
    [<svg viewBox="0 0 30 30" className={z}><rect width="30" height="30" fill="#d8083f" /><path d="M20 12v-1.500C20 7 18 6 15.500 6S11 7.200 11 10.500v9c0 3.300 2 4.500 4.500 4.500s4.500-1 4.500-4.500V18" fill="none" stroke="#fff" strokeWidth="3.300" /><path d="M9 11.500h4M9 18.500h4" stroke="#d8083f" strokeWidth="1.200" /></svg>, true],
    [<SLogo c={z} />, true],
    [<EdgeLogo c="h-[30px] w-[30px]" />, true],
    [<svg viewBox="0 0 30 30" className={z}><path d="M6 3h10l2 3v21H6z" fill="#ffd76e" /><path d="M15 28a5 5 0 0 1 1-9 5 5 0 0 1 8 1 4 4 0 0 1 3 8z" fill="#0f7ad6" /></svg>, true],
    [<svg viewBox="0 0 30 30" className={z}><rect width="30" height="30" fill="#1db954" /><rect x="4" y="4" width="22" height="22" fill="none" stroke="#fff" strokeWidth="2" /><path d="M11 9l10 6-10 6z" fill="#fff" /></svg>, true],
  ];
  return (
    <div className="relative flex h-[60px] shrink-0 items-center border-t border-[#e2e2e2] bg-[#f3f3f3] text-[15px] [--tv:#2a2a2a] [--tw:#cfcfcf]">
      <svg viewBox="0 0 28 26" className="mt-[-3px] ml-[26px] h-[26px] w-7"><path d="M10 1c1 6-2 11-10 11 3 5 14 5 15-3 0-4-2-7-5-8z" fill="#f8b526" /><path d="M8 25a6 6 0 0 1 0-11 7 7 0 0 1 13 0c9 1 8 11 1 11z" fill="#bcd0ea" /></svg>
      <div className="ml-[11px] w-[483px] text-[14.200px] leading-5"><div>77°F</div><div className="text-[#5c5c5c]">Partly cloudy</div></div>
      <div className="flex">
        {apps.map(([a, run], k) => (
          <div key={k} className="relative flex h-[60px] w-[55.100px] items-center justify-center">{a}{run && <i className="absolute bottom-[5px] h-[4px] w-[7px] rounded-full bg-[#888]" />}</div>
        ))}
      </div>
      <ChevronUp className="ml-[155px] h-5 w-5" strokeWidth={1.500} />
      <div className="relative ml-[8px] h-6 w-6"><svg viewBox="0 0 24 24" className="h-6 w-6"><path d="M3 18a6 6 0 0 1 1-9c2-4 8-5 11-1l-9 10z" fill="#555" /><path d="M8 19c-2-6 3-10 8-9 3 1 4 4 3 8z" fill="#ccc" /><circle cx="16" cy="16.500" r="6" fill="#fce300" /><path d="M16 13v4M16 18.500V20" stroke="#000" strokeWidth="1.500" /></svg></div>
      <div className="ml-[3px] flex h-[50px] w-10 items-center justify-center rounded-md bg-[#1f6b78] text-white"><MicFull c="h-5 w-[18px]" /></div>
      <div className="ml-[11px] w-[34px] text-center text-[14.200px] leading-5">ENG<br />IN</div>
      <Wifi className="ml-[20px] h-5 w-5" strokeWidth={1.800} />
      <Volume2 className="ml-[9px] h-5 w-5" strokeWidth={1.500} />
      <svg viewBox="0 0 20 14" className="ml-[11px] h-[14px] w-5" fill="none" stroke="#222" strokeWidth="1.600"><rect x="1" y="1" width="15" height="12" rx="3" /><path d="M18.500 5v4" /><path d="M5 4v6" strokeWidth="3" /></svg>
      <div className="ml-auto text-right text-[14.500px] leading-5">20:35<br />24-09-2022</div>
      <div className="mr-[24px] ml-[9px] flex h-5 w-5 items-center justify-center rounded-full bg-[#248092] text-[12px] text-white">1</div>
    </div>
  );
}

export default function App() {
  return (
    <div className="relative flex h-[1080px] w-[1920px] flex-col overflow-hidden bg-[#f7f7f7] font-['Open_Sans',sans-serif] text-black [font-stretch:90%]">
      <TabStrip />
      <AddressBar />
      <div className="flex h-[54px] shrink-0 items-center justify-between border-b border-[#b5b5b5] pr-[19px] pl-5 text-[14.800px]">
        <span className="pt-px">"UiPath Web Automation 22.10" started</span><X className="h-[22px] w-[22px]" strokeWidth={1.400} />
      </div>
      <div className="flex h-[3px] shrink-0 bg-[#f7f7f7]" />
      <div className="flex h-[877px] shrink-0 overflow-hidden">
        <Site />
        <div className="flex w-[11px] shrink-0 bg-[#f6f6f6] pt-[223px]"><div className="h-[425px] w-[10px] rounded-full bg-[#c3c3c3]" /></div>
        <SideBar />
      </div>
      <MeetingWindow />
      <Taskbar />
    </div>
  );
}
